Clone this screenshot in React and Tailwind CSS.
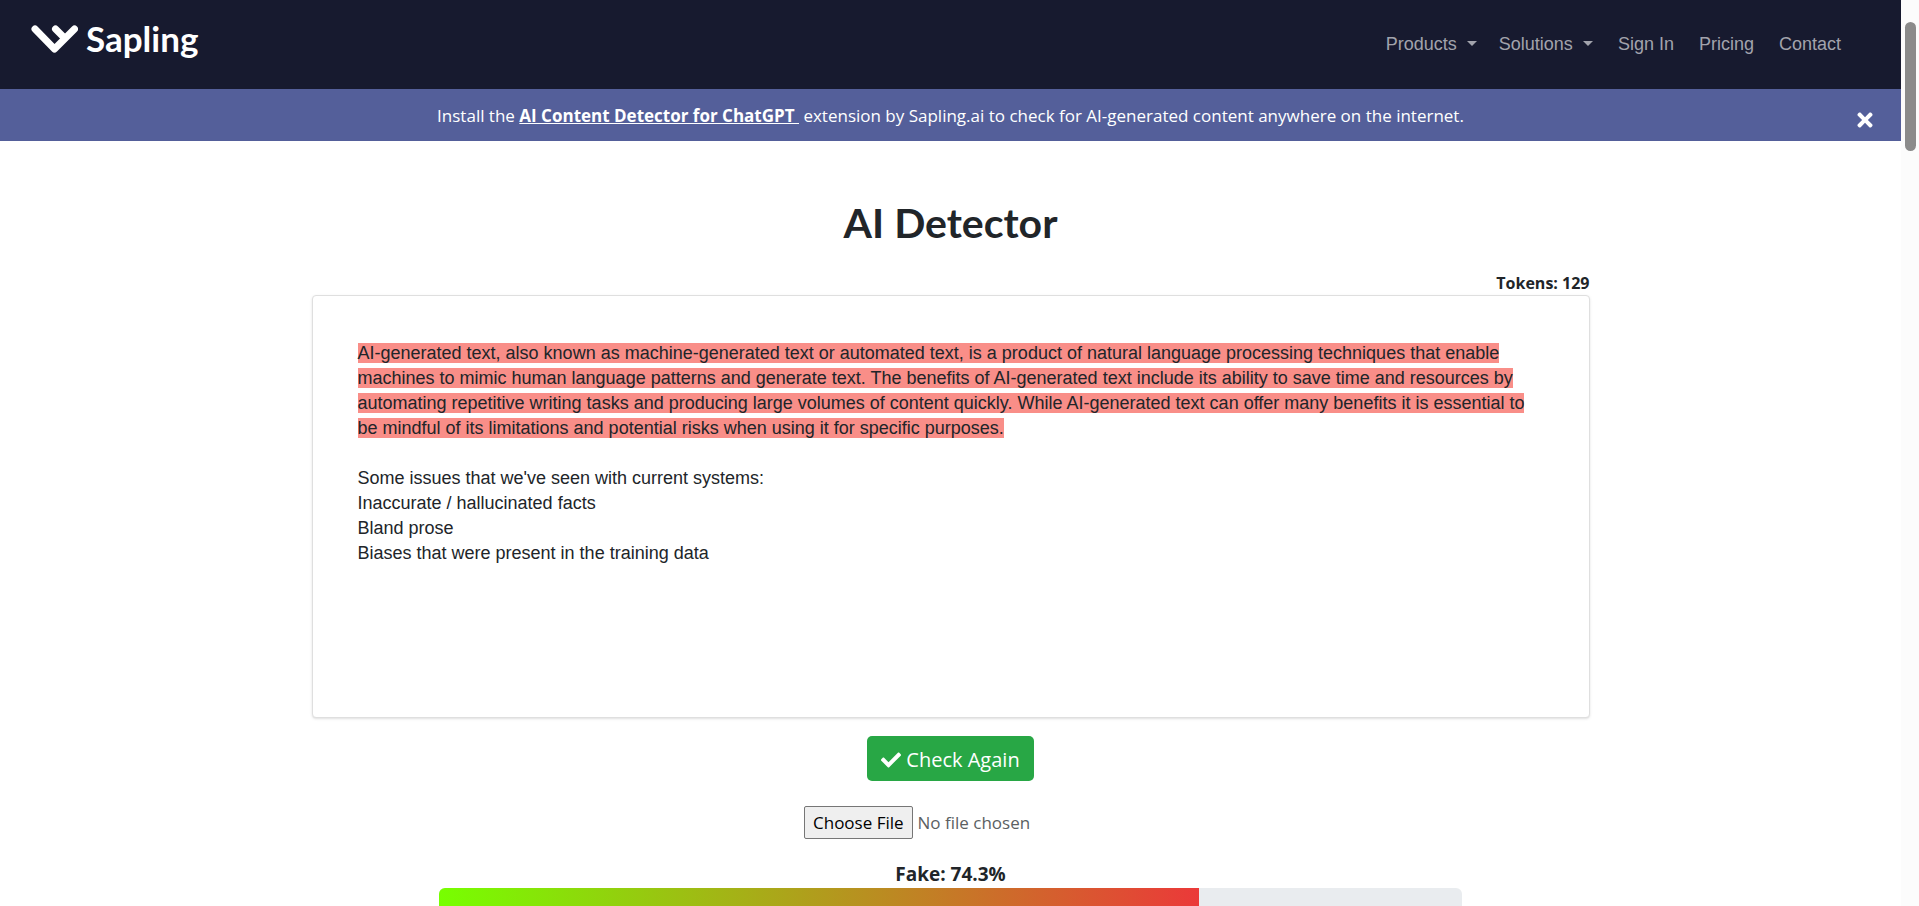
import { FaCheck, FaTimes } from "react-icons/fa";

const FAKE_SCORE = 74.3;

const NAV_ITEMS = [
  { label: "Sign In" },
  { label: "Pricing" },
  { label: "Contact" },
];

function Logo() {
  return (
    <a href="#" aria-label="Sapling" className="flex items-center gap-2 text-white">
      <svg viewBox="0 0 48 32" className="h-8 w-12" fill="none" stroke="currentColor" strokeWidth="7" strokeLinecap="round" strokeLinejoin="round" aria-hidden="true">
        <path d="M5 7 L24.5 27 L44.5 7" />
        <path d="M25.5 7 L34.5 16" />
      </svg>
      <span className="font-['Lato',sans-serif] text-[35px] leading-10 font-bold">Sapling</span>
    </a>
  );
}

function DropdownItem({ label }) {
  return (
    <button type="button" aria-haspopup="menu" className="flex items-center gap-[10px]">
      {label}
      <span className="mb-px border-x-5 border-t-5 border-x-transparent border-t-current" />
    </button>
  );
}

function Header() {
  return (
    <header className="flex h-[89px] items-center justify-between bg-[#171a2f] pr-[60px] pl-[30px]">
      <div className="pb-[14px]">
        <Logo />
      </div>
      <nav className="flex items-center gap-[25px] pb-0.5 font-['Liberation_Sans',sans-serif] text-lg text-[#a2a3ac]">
        <div className="flex gap-[22px]">
          <DropdownItem label="Products" />
          <DropdownItem label="Solutions" />
        </div>
        {NAV_ITEMS.map((item) => (
          <a key={item.label} href="#">{item.label}</a>
        ))}
      </nav>
    </header>
  );
}

function Banner() {
  return (
    <div className="relative bg-[#545f9a] pt-[13px] pb-[11px] text-center text-[17px] leading-7 text-white">
      Install the{" "}
      <a href="#" className="font-bold underline">AI Content Detector for ChatGPT&nbsp;</a>
      {" "}extension by Sapling.ai to check for AI-generated content anywhere on the internet.
      <button type="button" aria-label="Dismiss" className="absolute top-5 right-[25px]">
        <FaTimes size={22} />
      </button>
    </div>
  );
}

function ResultCard() {
  return (
    <div className="min-h-[423px] w-full rounded-sm border border-[#dfdfdf] bg-white px-[45px] py-[45px] font-['Liberation_Sans',sans-serif] text-lg leading-[25px] shadow-sm">
      <p>
        <mark className="bg-[#f98e88] text-inherit">
          AI-generated text, also known as machine-generated text or automated text, is a product of natural language processing techniques that enable machines to mimic human language patterns and generate text. The benefits of AI-generated text include its ability to save time and resources by automating repetitive writing tasks and producing large volumes of content quickly. While AI-generated text can offer many benefits it is essential to be mindful of its limitations and potential risks when using it for specific purposes.
        </mark>
      </p>
      <p className="mt-[25px]">Some issues that we've seen with current systems:</p>
      <p>Inaccurate / hallucinated facts</p>
      <p>Bland prose</p>
      <p>Biases that were present in the training data</p>
    </div>
  );
}

function ScoreBar() {
  return (
    <div className="mt-[21px] w-4/5">
      <div className="text-center text-[19px] leading-7 font-bold">Fake: {FAKE_SCORE}%</div>
      <div role="progressbar" aria-label="Fake score" aria-valuenow={FAKE_SCORE} aria-valuemin={0} aria-valuemax={100} className="h-9 overflow-hidden rounded-md bg-[#e9ecef]">
        <div className="h-full bg-linear-to-r/srgb from-[#77ff00] to-[#eb3939]" style={{ width: `${FAKE_SCORE}%` }} />
      </div>
    </div>
  );
}

export default function App() {
  return (
    <div className="flex h-screen bg-white font-['Open_Sans',sans-serif] text-[#212529]">
      <div className="min-w-0 flex-1 overflow-y-auto [scrollbar-width:none]">
        <Header />
        <Banner />
        <main className="mx-auto flex w-full max-w-[1278px] flex-col items-center pt-[54px]">
          <h1 className="font-['Lato',sans-serif] text-[41px] leading-14 font-bold">AI Detector</h1>
          <div className="mt-5 self-end text-base leading-6 font-bold">Tokens: 129</div>
          <ResultCard />
          <button type="button" className="mt-[18px] flex h-[45px] items-center gap-[5px] rounded-[5px] bg-[#28a745] px-[14px] pt-0.5 text-xl text-white">
            <FaCheck size={20} />
            Check Again
          </button>
          <input
            type="file"
            aria-label="Choose a file"
            className="mt-[25px] w-[293px] text-[17px] leading-6 text-[#5b5f63] file:mr-[5px] file:h-[33px] file:rounded-[2px] file:border file:border-solid file:border-[#767676] file:bg-[#efefef] file:px-2 file:text-black"
          />
          <ScoreBar />
        </main>
      </div>
      <div className="w-[18px] shrink-0 bg-[#fcfcfc] px-1 pt-[22px]">
        <div className="h-[129px] w-[11px] rounded-full bg-[#8b8b8b]" />
      </div>
    </div>
  );
}
